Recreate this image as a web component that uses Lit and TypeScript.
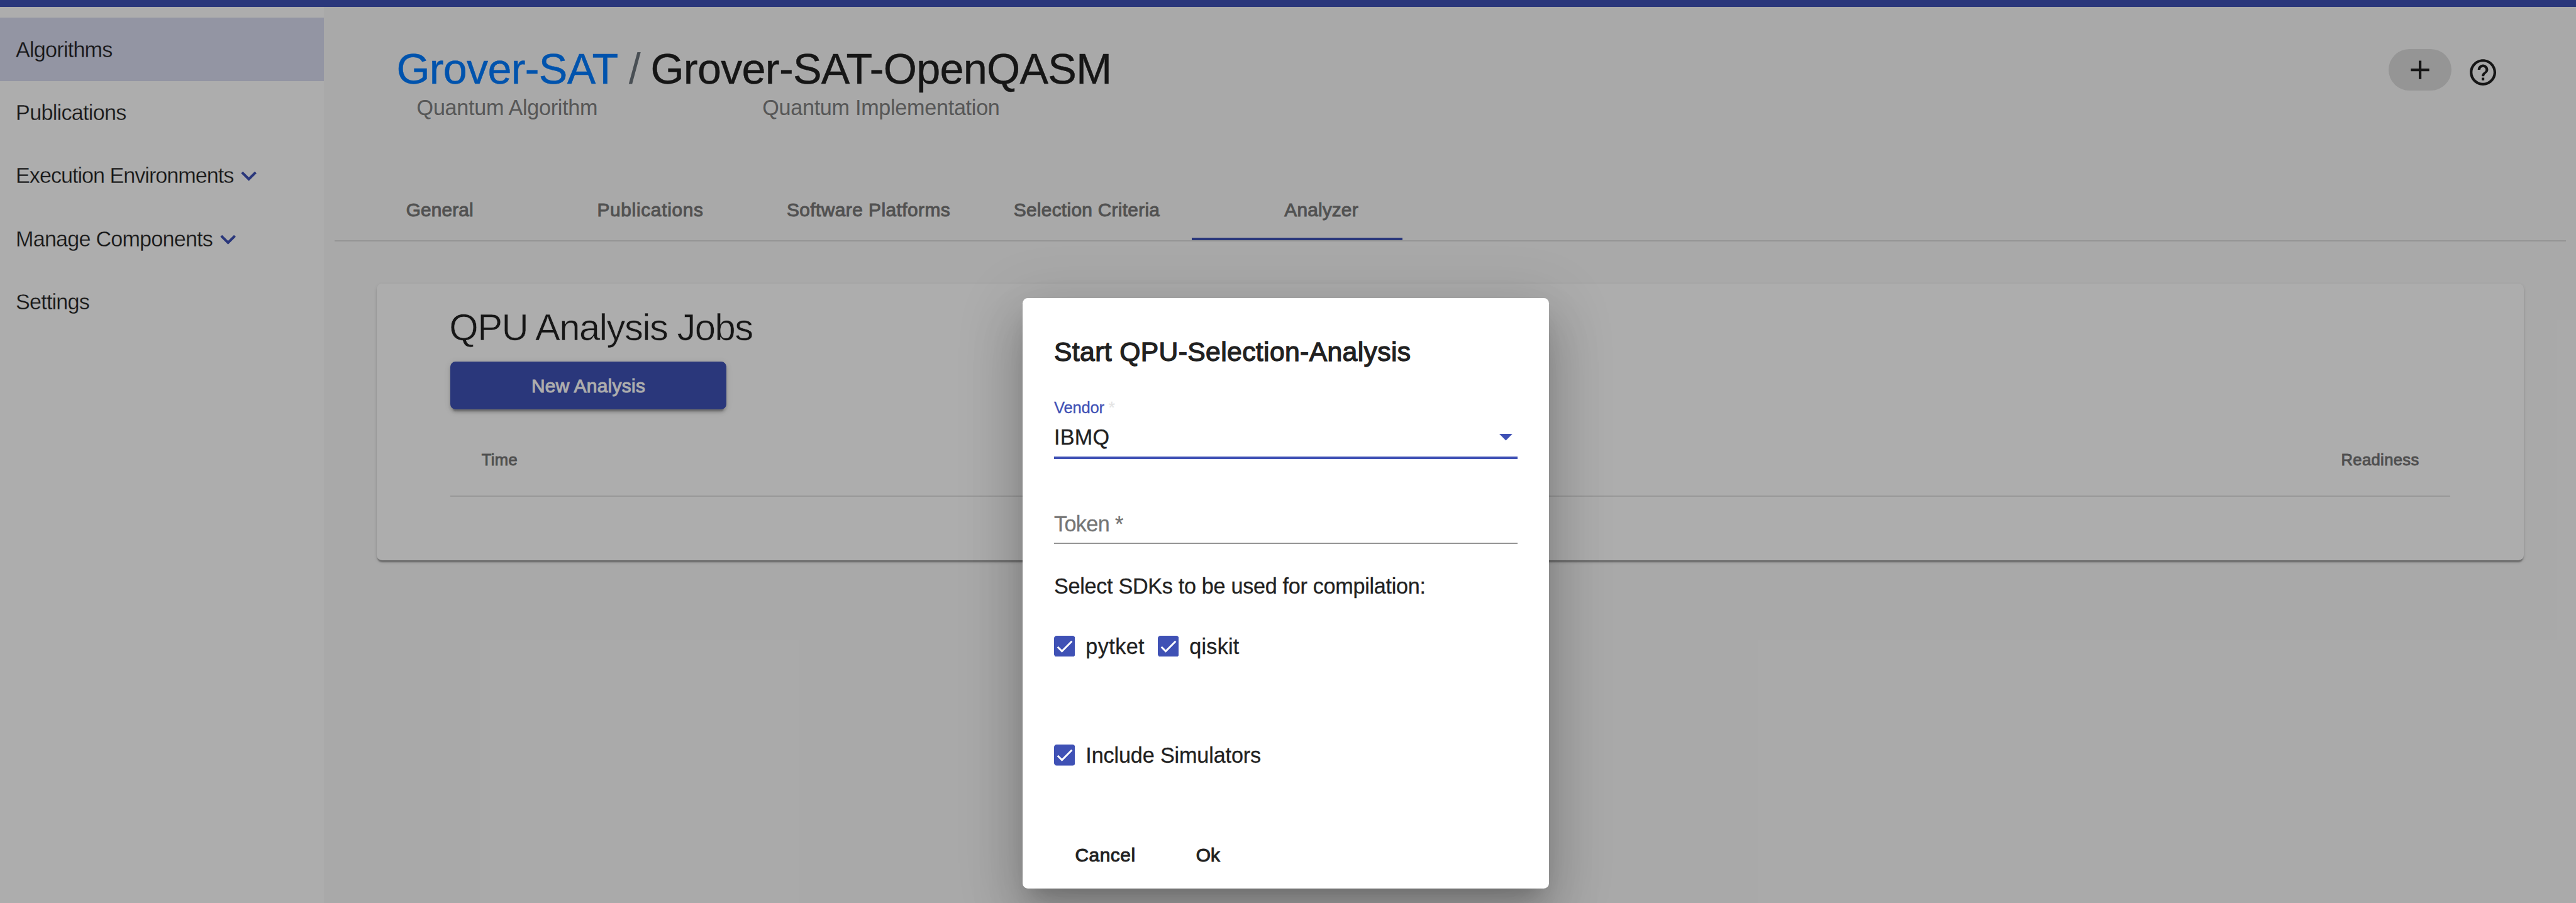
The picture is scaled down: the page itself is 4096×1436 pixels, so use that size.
import { LitElement, html, css, svg, unsafeCSS, nothing } from "lit";
import { customElement } from "lit/decorators.js";
import { classMap } from "lit/directives/class-map.js";

// Design units are 1/5109 of the page width; the page is laid out 4096px wide.
const SCALE = 4096 / 5109;
const u = (n: number) => unsafeCSS(`${+(n * SCALE).toFixed(2)}px`);

interface NavItem { label: string; active?: boolean; expandable?: boolean; track: number }
const NAV: NavItem[] = [
  { label: "Algorithms", active: true, track: -0.78 },
  { label: "Publications", track: -0.71 },
  { label: "Execution Environments", expandable: true, track: -1 },
  { label: "Manage Components", expandable: true, track: -0.79 },
  { label: "Settings", track: -0.81 },
];

interface Tab { label: string; kind: string; track: number; selected?: boolean }
const TABS: Tab[] = [
  { label: "General", kind: "", track: 0.13 },
  { label: "Publications", kind: "", track: 0.7 },
  { label: "Software Platforms", kind: "wide", track: 0.47 },
  { label: "Selection Criteria", kind: "", track: 0.3 },
  { label: "Analyzer", kind: "last", track: 0.18, selected: true },
];

const base = css`
  * { box-sizing: border-box; }
  :host { font-family: "Liberation Sans", Arial, sans-serif; color: #212121; white-space: nowrap; }
  svg { display: block; flex: none; }
`;

@customElement("side-nav")
class SideNav extends LitElement {
  static styles = [base, css`
    :host { display: block; width: ${u(642)}; flex: none; background: #fff; padding-top: ${u(21)}; }
    .item {
      display: flex; align-items: center; height: ${u(125.3)};
      padding: ${u(2)} 0 0 ${u(31.3)}; font-size: ${u(42.6)};
      -webkit-text-stroke: 0.3px #fff;
    }
    .active { background: #d9dcf0; -webkit-text-stroke-color: #d9dcf0; }
    .chevron { width: ${u(61.5)}; height: ${u(61.5)}; fill: #3f51b5; stroke: none; }
  `];
  render() {
    return NAV.map((n) => html`
      <div class=${classMap({ item: true, active: !!n.active })}>
        <span style="letter-spacing:${n.track}px">${n.label}</span>
        ${n.expandable ? html`<svg class="chevron" viewBox="0 0 24 24"><path d="M16.59 8.59L12 13.17 7.41 8.59 6 10l6 6 6-6z"/></svg>` : nothing}
      </div>`);
  }
}

@customElement("page-header")
class PageHeader extends LitElement {
  static styles = [base, css`
    :host { display: flex; align-items: flex-start; height: ${u(338)}; padding: ${u(81)} ${u(132.9)} 0 ${u(122.9)}; }
    .crumb { display: flex; flex-direction: column; align-items: center; gap: ${u(8.8)}; }
    .title { font-size: ${u(85.2)}; line-height: ${u(84)}; letter-spacing: -.71px; -webkit-text-stroke: 0.4px currentColor; }
    .link { color: #007bff; }
    .slash { color: #6c757d; margin: 0 ${u(20.5)} 0 ${u(21.5)}; -webkit-text-stroke: 0; }
    .sub { font-size: ${u(42.6)}; line-height: ${u(50)}; color: #808080; letter-spacing: -.27px; }
    .actions { display: flex; align-items: flex-start; margin-left: auto; gap: ${u(31.5)}; }
    .add {
      display: flex; align-items: center; justify-content: center; margin-top: ${u(2)};
      width: ${u(125)}; height: ${u(83)}; border-radius: ${u(42)}; background: #dcdcdc;
    }
    .help { margin-top: ${u(17.2)}; }
    svg { width: ${u(62.6)}; height: ${u(62.6)}; fill: #212121; }
  `];
  render() {
    return html`
      <div class="crumb"><div class="title link">Grover-SAT</div><div class="sub">Quantum Algorithm</div></div>
      <div class="title slash">/</div>
      <div class="crumb"><div class="title">Grover-SAT-OpenQASM</div><div class="sub">Quantum Implementation</div></div>
      <div class="actions">
        <div class="add"><svg viewBox="0 0 24 24"><path d="M19 13h-6v6h-2v-6H5v-2h6V5h2v6h6z"/></svg></div>
        <div class="help"><svg viewBox="0 0 24 24"><path d="M11 18h2v-2h-2v2zm1-16C6.48 2 2 6.48 2 12s4.48 10 10 10 10-4.48 10-10S17.52 2 12 2zm0 18c-4.41 0-8-3.59-8-8s3.59-8 8-8 8 3.59 8 8-3.59 8-8 8zm0-14c-2.21 0-4 1.79-4 4h2c0-1.1.9-2 2-2s2 .9 2 2c0 2-3 1.75-3 5h2c0-2.25 3-2.5 3-5 0-2.21-1.79-4-4-4z"/></svg></div>
      </div>`;
  }
}

@customElement("tab-bar")
class TabBar extends LitElement {
  static styles = [base, css`
    :host { display: flex; height: ${u(127.6)}; border-bottom: 2px solid #dcdcdc; }
    .tab {
      position: relative; display: flex; align-items: center; justify-content: center;
      width: ${u(417.6)}; padding-top: ${u(5)}; font-size: ${u(37.2)}; color: #787878;
      -webkit-text-stroke: 1px #787878;
    }
    .wide { width: ${u(448)}; }
    .last { width: ${u(513)}; }
    .ink { position: absolute; left: 0; bottom: 0; width: ${u(417.6)}; height: 4px; background: #3f51b5; }
  `];
  render() {
    return TABS.map((t) => html`
      <div class="tab ${t.kind}"><span style="letter-spacing:${t.track}px">${t.label}</span>
        ${t.selected ? html`<div class="ink"></div>` : nothing}</div>`);
  }
}

@customElement("jobs-card")
class JobsCard extends LitElement {
  static styles = [base, css`
    :host {
      display: block; height: ${u(548.2)}; margin: ${u(83)} ${u(83)} 0 ${u(83.6)};
      padding: ${u(43)} ${u(146)} 0; background: #fff; border-radius: ${u(10.4)};
      box-shadow: 0 4.2px 2.1px -2.1px rgba(0,0,0,.2), 0 2.1px 2.1px 0 rgba(0,0,0,.14), 0 2.1px 6.3px 0 rgba(0,0,0,.12);
    }
    .title {
      margin-left: ${u(-2)}; font-size: ${u(74.5)}; line-height: ${u(90)}; letter-spacing: -1.5px;
      -webkit-text-stroke: 0.6px #fff;
    }
    .button {
      display: flex; align-items: center; justify-content: center; margin-top: ${u(22.1)}; padding-top: ${u(3)};
      width: ${u(548)}; height: ${u(94.2)}; border-radius: ${u(10.4)}; background: #3f51b5; color: #fff;
      font-size: ${u(37.2)}; letter-spacing: .32px; -webkit-text-stroke: 1px #fff;
      box-shadow: 0 6.3px 2.1px -4.2px rgba(0,0,0,.2), 0 4.2px 4.2px 0 rgba(0,0,0,.14), 0 2.1px 10.5px 0 rgba(0,0,0,.12);
    }
    .head {
      display: flex; align-items: center; justify-content: space-between; margin-top: ${u(29.4)};
      height: ${u(143.6)}; padding: 0 ${u(62)}; border-bottom: 2px solid #e0e0e0;
      font-size: ${u(31.9)}; color: #757575; -webkit-text-stroke: 0.9px #757575; letter-spacing: .38px;
    }
  `];
  render() {
    return html`
      <div class="title">QPU Analysis Jobs</div>
      <div class="button">New Analysis</div>
      <div class="head"><span>Time</span><span>Readiness</span></div>`;
  }
}

const check = svg`<rect width="24" height="24" rx="3" fill="#3f51b5"/><path d="M4.1 12.7L9 17.6 20.3 6.3" fill="none" stroke="#fff" stroke-width="2.13"/>`;

@customElement("analysis-dialog")
class AnalysisDialog extends LitElement {
  static styles = [base, css`
    :host {
      display: block; width: ${u(1044.3)}; height: ${u(1171.8)}; padding: ${u(70.9)} ${u(62.6)} 0;
      background: #fff; border-radius: ${u(10.4)}; font-size: ${u(42.6)}; line-height: ${u(56)};
      -webkit-text-stroke: 0.3px currentColor;
      box-shadow: 0 23px 31.4px -14.6px rgba(0,0,0,.2), 0 50.2px 79.5px 6.3px rgba(0,0,0,.14), 0 18.8px 96.3px 16.7px rgba(0,0,0,.12);
    }
    .title { font-size: ${u(53.2)}; line-height: ${u(70)}; letter-spacing: .38px; -webkit-text-stroke: 1.3px #212121; }
    .label { margin-top: ${u(55.9)}; font-size: ${u(31.9)}; line-height: ${u(40)}; color: #3f51b5; letter-spacing: -.2px; }
    .star { color: #e4e4e4; }
    .select { display: flex; align-items: center; justify-content: space-between; margin-top: ${u(11.7)}; padding-right: ${u(10)}; letter-spacing: .3px; }
    .arrow { width: ${u(26)}; height: ${u(13)}; fill: #3f51b5; }
    .line { height: 4px; margin-top: ${u(10.5)}; background: #3f51b5; }
    .token { margin-top: ${u(100.4)}; color: #757575; letter-spacing: -.6px; }
    .thin { height: 2px; margin-top: ${u(9.6)}; background: #949494; }
    .prompt { margin-top: ${u(55.1)}; letter-spacing: -.28px; }
    .row { display: flex; }
    .sdks { margin-top: ${u(61.9)}; }
    .sims { margin-top: ${u(158.4)}; letter-spacing: -.12px; }
    .check { display: flex; align-items: center; gap: ${u(21)}; }
    .check span { padding-top: ${u(2)}; }
    .first { width: ${u(205.8)}; letter-spacing: .43px; }
    .second { letter-spacing: .23px; }
    .check svg { width: ${u(41.8)}; height: ${u(41.8)}; }
    .actions { margin-top: ${u(144.2)}; padding-left: ${u(41.8)}; font-size: ${u(37.2)}; line-height: ${u(50)}; -webkit-text-stroke: 1px #212121; }
    .cancel { width: ${u(239.8)}; letter-spacing: .55px; }
    .ok { letter-spacing: .2px; }
  `];
  box(kind: string, label: string) {
    return html`<div class="check ${kind}"><svg viewBox="0 0 24 24">${check}</svg><span>${label}</span></div>`;
  }
  render() {
    return html`
      <div class="title">Start QPU-Selection-Analysis</div>
      <div class="label">Vendor<span class="star"> *</span></div>
      <div class="select"><span>IBMQ</span><svg class="arrow" viewBox="0 0 10 5"><path stroke="none" d="M0 0h10L5 5z"/></svg></div>
      <div class="line"></div>
      <div class="token">Token *</div>
      <div class="thin"></div>
      <div class="prompt">Select SDKs to be used for compilation:</div>
      <div class="row sdks">${this.box("first", "pytket")}${this.box("second", "qiskit")}</div>
      <div class="row sims">${this.box("", "Include Simulators")}</div>
      <div class="row actions"><div class="cancel">Cancel</div><div class="ok">Ok</div></div>`;
  }
}

@customElement("app-root")
class AppRoot extends LitElement {
  static styles = [base, css`
    :host { display: flex; flex-direction: column; position: relative; width: 4096px; height: 1436px; overflow: hidden; background: #fafafa; }
    .topbar { height: ${u(14)}; flex: none; background: #3f51b5; }
    .shell { display: flex; flex: 1; min-height: 0; }
    .main { flex: 1; min-width: 0; padding: 0 ${u(20)} 0 ${u(21.4)}; background: #fafafa; }
    .backdrop { position: absolute; inset: 0; background: rgba(0,0,0,.32); }
    .dialog { position: absolute; left: ${u(2027.9)}; top: ${u(591)}; }
  `];
  render() {
    return html`
      <div class="topbar"></div>
      <div class="shell">
        <side-nav></side-nav>
        <div class="main">
          <page-header></page-header>
          <tab-bar></tab-bar>
          <jobs-card></jobs-card>
        </div>
      </div>
      <div class="backdrop"></div>
      <analysis-dialog class="dialog"></analysis-dialog>`;
  }
}
